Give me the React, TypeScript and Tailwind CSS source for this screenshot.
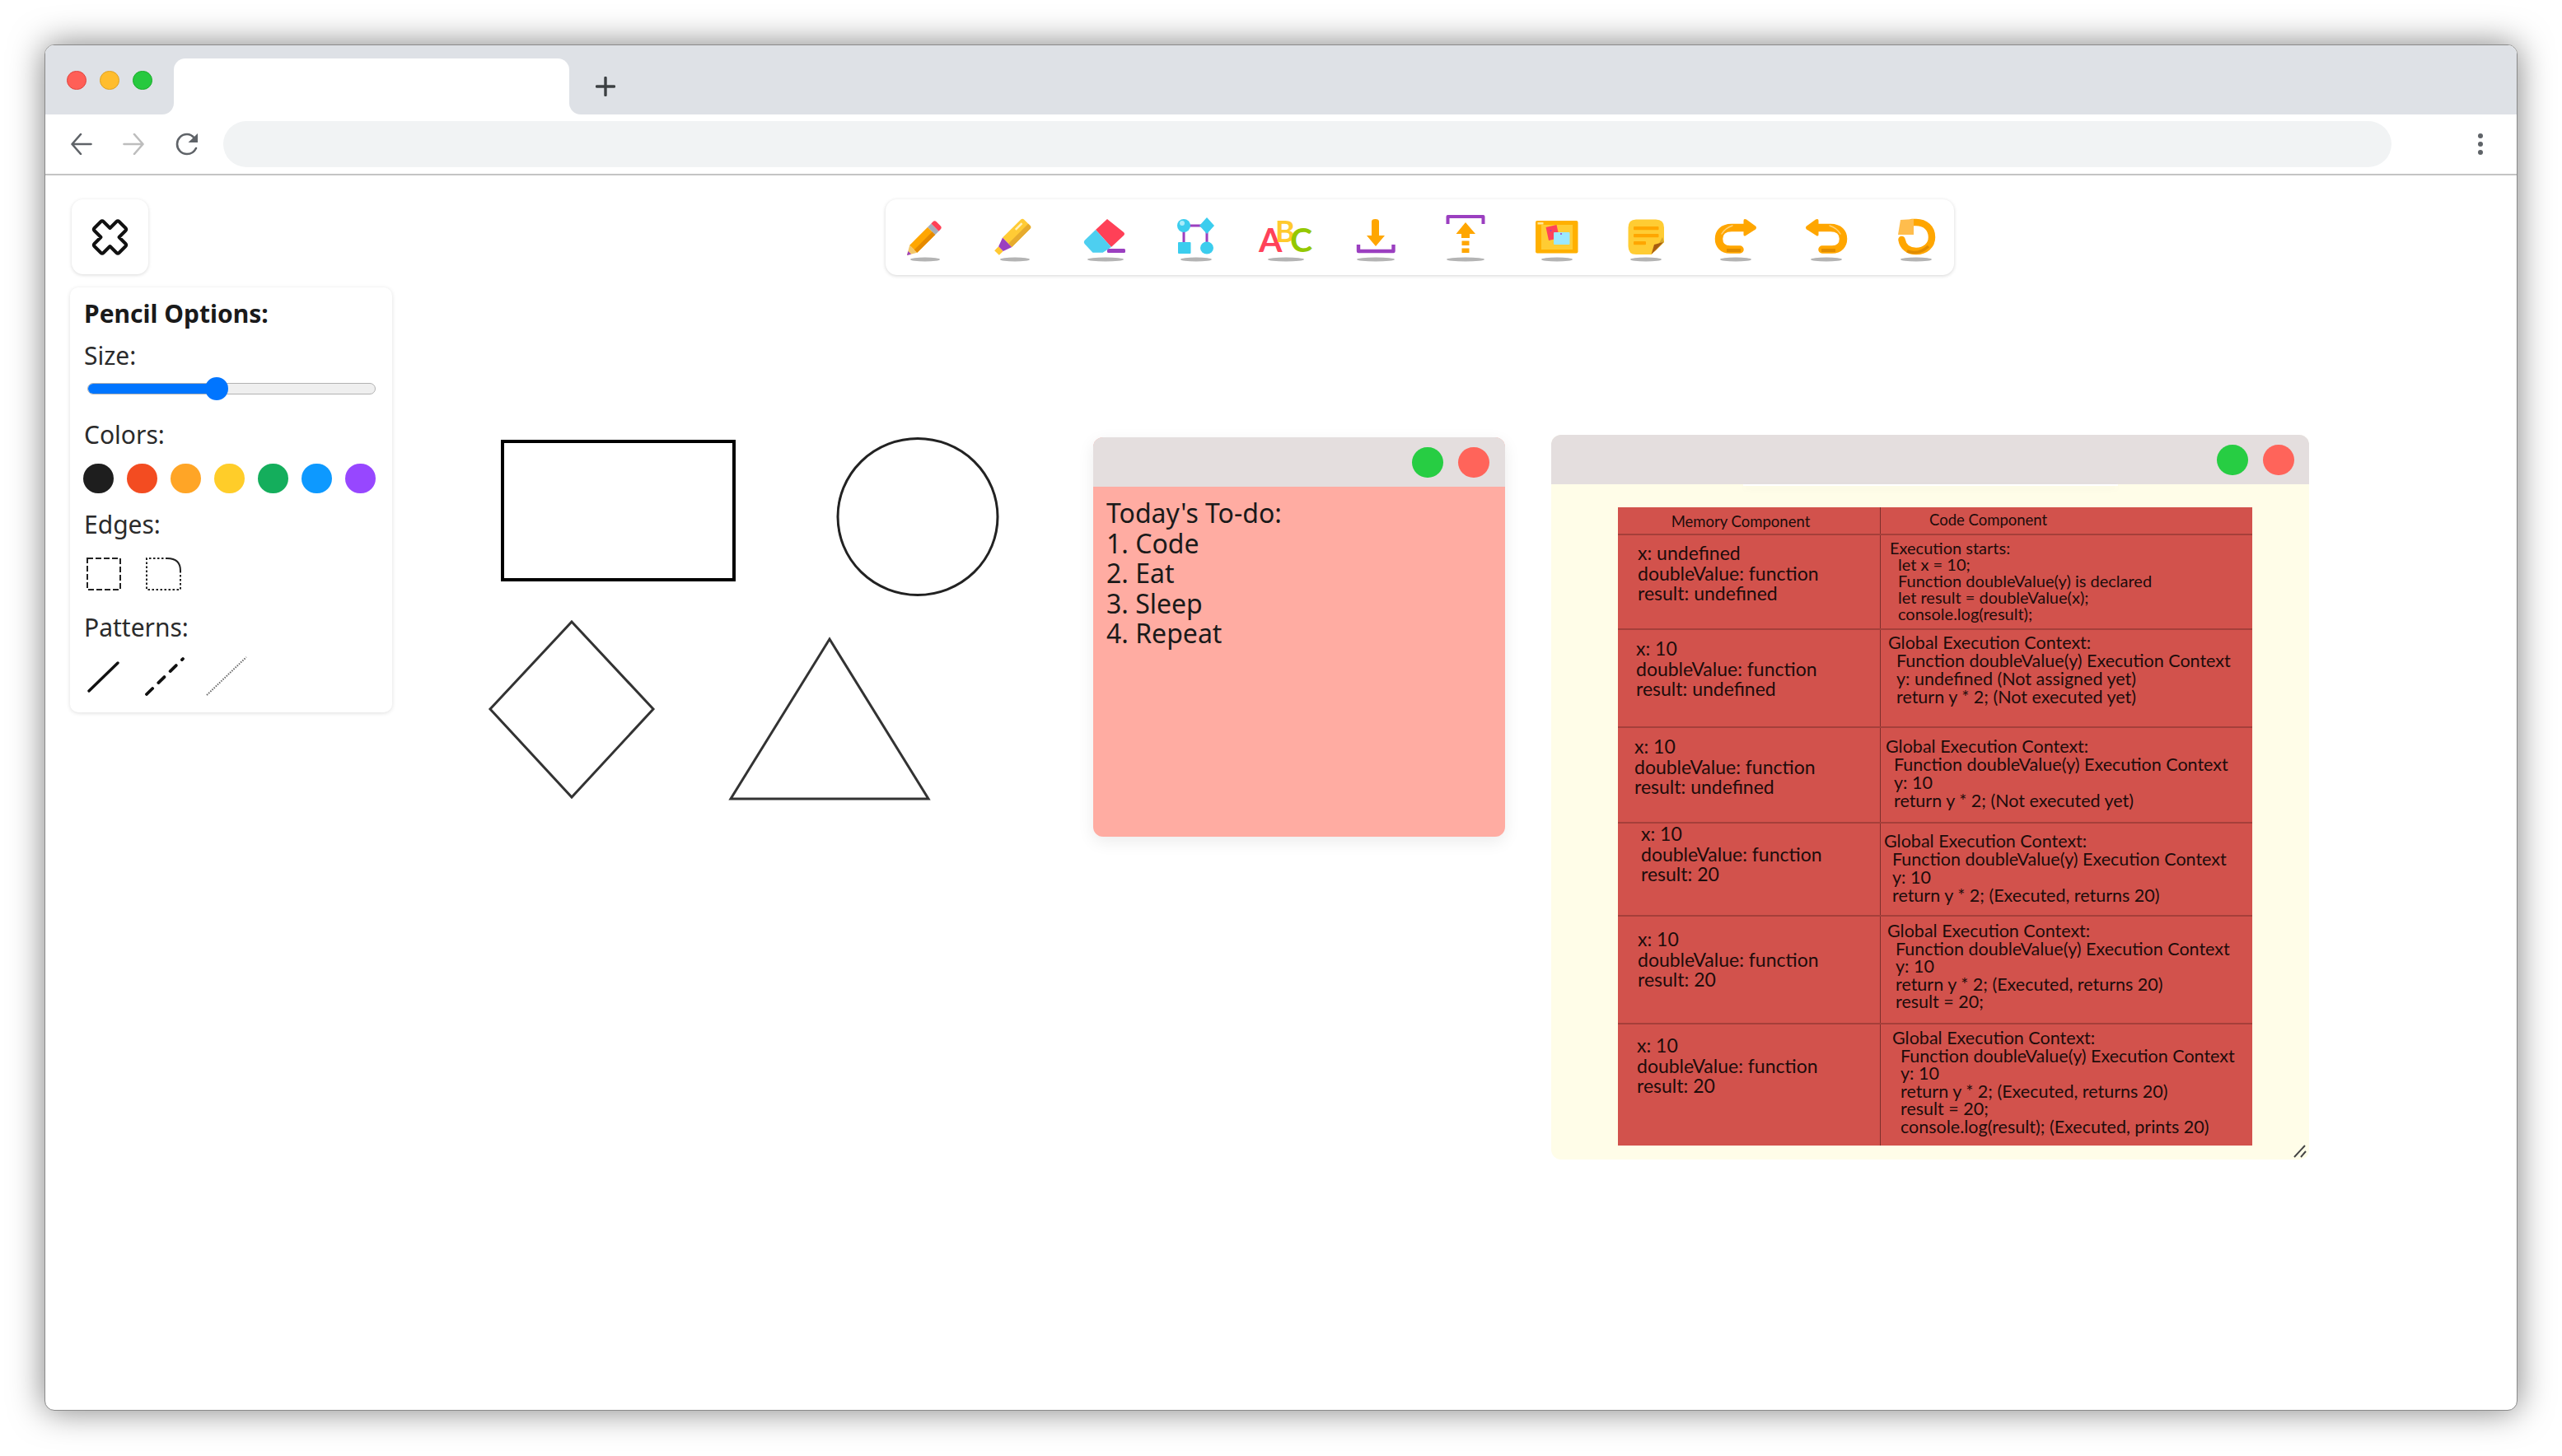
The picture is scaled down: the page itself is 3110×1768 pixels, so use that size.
import type { ReactNode } from "react";

const uiFont = "font-['Noto_Sans',sans-serif]";

function ToolIcon({ cx = 31, rx, children }: { cx?: number; rx: number; children: ReactNode }) {
  return (
    <svg viewBox="0 0 60 70" className="h-[70px] w-[60px] overflow-visible" aria-hidden>
      {children}
      <ellipse cx={cx} cy="62" rx={rx} ry="2.6" fill="#b4b4b4" />
    </svg>
  );
}

function PencilIcon() {
  return (
    <ToolIcon rx={18}>
      <g transform="translate(9 57) rotate(-45)">
        <path d="M0 0 11 -6.5V6.5Z" fill="#f2c76b" />
        <path d="M0 0 4.5 -2.6V2.6Z" fill="#9b3fc0" />
        <rect x="11" y="-6.5" width="31" height="13" fill="#ffa600" />
        <rect x="11" y="1.5" width="31" height="5" fill="#e58a00" />
        <rect x="42" y="-6.5" width="6" height="13" fill="#a6aebb" />
        <path d="M48 -6.5h3a3 3 0 0 1 3 3v7a3 3 0 0 1-3 3h-3Z" fill="#ff4057" />
      </g>
    </ToolIcon>
  );
}

function HighlighterIcon() {
  return (
    <ToolIcon rx={18}>
      <g transform="translate(9 54) rotate(-45)">
        <path d="M0 -4H7V4H0Z" fill="#ffc933" />
        <path d="M7 -4 18 -8V8L7 4Z" fill="#9b3fc0" />
        <path d="M18 -8H49a3 3 0 0 1 3 3V5a3 3 0 0 1-3 3H18Z" fill="#ffcb35" />
        <path d="M18 2H52V5a3 3 0 0 1-3 3H18Z" fill="#e6ab2e" />
        <rect x="36" y="-5" width="11" height="2.4" fill="#fff3c4" />
      </g>
    </ToolIcon>
  );
}

function EraserIcon() {
  return (
    <ToolIcon rx={22}>
      <rect x="33" y="49" width="22" height="5" rx="1.5" fill="#9b3fc0" />
      <path d="M33 13 53 29q2 2 0 4L38 47 19 26Z" fill="#ff4057" />
      <path d="M19 26 38 47 27.7 53.7H15.5L5.5 43q-1.5-2 0-4Z" fill="#4dcff0" />
    </ToolIcon>
  );
}

function NodesIcon() {
  return (
    <ToolIcon rx={19} cx={32}>
      <path d="M17 21H45V48M17 21V45" fill="none" stroke="#9b3fc0" strokeWidth="3" />
      <circle cx="17" cy="21" r="8" fill="#3bcdee" />
      <circle cx="15" cy="18" r="3" fill="#a9ecfa" />
      <path d="M45 11 54 21 45 31 36 21Z" fill="#3bcdee" />
      <rect x="10" y="41" width="15.5" height="14" rx="1" fill="#3bcdee" />
      <ellipse cx="45" cy="48" rx="8" ry="7.5" fill="#3bcdee" />
    </ToolIcon>
  );
}

function AbcIcon() {
  return (
    <ToolIcon rx={22} cx={32}>
      <g className="font-['Lato',sans-serif]" fontSize="41" fontWeight="700">
        <text x="-1" y="53" fill="#ff4259">A</text>
        <text x="19" y="41" fontSize="36" fill="#ffca2e">B</text>
        <text x="37" y="53" fill="#94c800">C</text>
      </g>
    </ToolIcon>
  );
}

function DownloadIcon() {
  return (
    <ToolIcon rx={23}>
      <path d="M10 44V52H52.5V44" fill="none" stroke="#9b3fc0" strokeWidth="4.4" strokeLinejoin="round" />
      <path d="M26 16q0-3 4.500-3t4.500 3V33H42L31 46 20 33H26Z" fill="#ffa600" />
    </ToolIcon>
  );
}

function UploadIcon() {
  return (
    <ToolIcon rx={23}>
      <path d="M9.500 19V10H52.500V19" fill="none" stroke="#9b3fc0" strokeWidth="4" strokeLinejoin="round" />
      <path d="M31 17 43 31H36V36H26V31H19.500Z" fill="#ffa600" />
      <rect x="26.500" y="39.500" width="9" height="5.500" fill="#ffa600" />
      <rect x="26.500" y="48.500" width="9" height="5.500" fill="#ffa600" />
    </ToolIcon>
  );
}

function BoardIcon() {
  return (
    <ToolIcon rx={19} cx={32}>
      <rect x="6" y="15" width="51.500" height="39.500" rx="2" fill="#ffb000" />
      <rect x="13" y="20" width="38" height="30" fill="#ffcc33" />
      <rect x="8.500" y="17" width="7" height="2.500" fill="#ffe89a" />
      <path d="M18.500 23 31.500 20 35 36 22 39Z" fill="#ff4259" />
      <rect x="28" y="29" width="19.500" height="15" rx="1" fill="#9be8ff" />
      <circle cx="37" cy="31" r="1" fill="#9b3fc0" />
      <circle cx="24.500" cy="27" r="1" fill="#9b3fc0" />
    </ToolIcon>
  );
}

function NoteIcon() {
  return (
    <ToolIcon rx={19} cx={31}>
      <path d="M19 13.500H43q10 0 10 10V41L37.500 56H19q-9.500 0-9.500-10V23.500q0-10 9.500-10Z" fill="#ffcc33" />
      <path d="M51 35 53 41 41 53Z" fill="#d9a92b" />
      <path d="M37.500 56 41 44 52 41Z" fill="#a85d10" />
      <rect x="16" y="22" width="30.500" height="4.200" rx="1" fill="#ffa600" />
      <rect x="16" y="31" width="30.500" height="4.200" rx="1" fill="#ffa600" />
      <rect x="16" y="40" width="15" height="4.200" rx="1" fill="#ffa600" />
    </ToolIcon>
  );
}

function RedoArrow() {
  return (
    <>
      <path d="M41 23.500H26C15 23.500 10.500 30 10.500 37S15 50 24 50H36" fill="none" stroke="#ffa600" strokeWidth="9.500" strokeLinecap="round" />
      <path d="M42 13q-1.500 0-1.500 2V32q0 2 2 1.500L55 25.500q2-2 0-4L44 13.500Z" fill="#ffa600" />
      <path d="M14 31Q18 24 27 21" fill="none" stroke="#ffd27a" strokeWidth="1.500" strokeLinecap="round" />
      <path d="M20 51H37" fill="none" stroke="#e08c00" strokeWidth="4" />
    </>
  );
}

function RedoIcon() {
  return (
    <ToolIcon rx={19} cx={31}>
      <RedoArrow />
    </ToolIcon>
  );
}

function UndoIcon() {
  return (
    <ToolIcon rx={19} cx={31}>
      <g transform="translate(62 0) scale(-1 1)">
        <RedoArrow />
      </g>
    </ToolIcon>
  );
}

function ResetIcon() {
  return (
    <ToolIcon rx={19} cx={31}>
      <path d="M13.500 38C15 47 22 52 31 52 42 52 50 45 50 35 50 24 42 17 31 17H26" fill="none" stroke="#ffa600" strokeWidth="8.500" strokeLinecap="round" />
      <path d="M12 14 28 13V32H9Z" fill="#ffbd4d" strokeLinejoin="round" />
      <path d="M20 52Q34 57 46 46" fill="none" stroke="#e08c00" strokeWidth="3.500" />
    </ToolIcon>
  );
}

function LogoMark() {
  return (
    <svg viewBox="0 0 44 44" className="h-[44px] w-[45px]" fill="none" stroke="#111" strokeWidth="4" strokeLinejoin="round" aria-hidden>
      <path d="M22 11 30 3Q31.500 1.500 33 3L41 11Q42.500 12.500 41 14L33 22 41 30Q42.500 31.500 41 33L33 41Q31.500 42.500 30 41L22 33 14 41Q12.500 42.500 11 41L3 33Q1.500 31.500 3 30L11 22 3 14Q1.500 12.500 3 11L11 3Q12.500 1.500 14 3Z" />
    </svg>
  );
}

function BrowserBar() {
  return (
    <>
      <div className="flex h-[84px] bg-white">
        <div className="flex w-[156px] items-start gap-[16.500px] rounded-br-[14px] bg-[#dee1e6] pl-[26px] pt-[31px]">
          <span className="h-[23px] w-[23.500px] rounded-full border border-[#e0443e] bg-[#ff5f57]" />
          <span className="h-[23px] w-[23.500px] rounded-full border border-[#dea123] bg-[#ffbd2e]" />
          <span className="h-[23px] w-[23.500px] rounded-full border border-[#1aab29] bg-[#27c93f]" />
        </div>
        <div className="w-[480px] bg-[#dee1e6] pt-[16px]">
          <div className="h-[68px] rounded-t-[14px] bg-white" />
        </div>
        <div className="flex-1 rounded-bl-[14px] bg-[#dee1e6] pl-[32px] pt-[38px]">
          <svg viewBox="0 0 24 24" className="h-[24px] w-[24px]" stroke="#3c4043" strokeWidth="3.400" strokeLinecap="round" aria-hidden>
            <path d="M12 1.500V22.500M1.500 12H22.500" />
          </svg>
        </div>
      </div>
      <div className="flex h-[74px] items-center border-b-2 border-[#c4c4c4] bg-white">
        <svg viewBox="0 0 26 26" className="ml-[31px] h-[26px] w-[26px]" fill="none" stroke="#5f6368" strokeWidth="2.600" strokeLinecap="round" strokeLinejoin="round" aria-hidden>
          <path d="M24.500 13H2M12 1 1.500 13 12 25" />
        </svg>
        <svg viewBox="0 0 26 26" className="ml-[37px] h-[26px] w-[26px]" fill="none" stroke="#bdbdbd" strokeWidth="2.600" strokeLinecap="round" strokeLinejoin="round" aria-hidden>
          <path d="M1.500 13H24M14 1 24.500 13 14 25" />
        </svg>
        <svg viewBox="0 0 28 28" className="ml-[38px] h-[28px] w-[28px]" fill="none" stroke="#5f6368" strokeWidth="2.600" strokeLinecap="round" aria-hidden>
          <path d="M23 7C20.500 3.500 17.500 2 14 2 7 2 2 7.500 2 14S7 26 14 26C19 26 23 23 25 19" />
          <path d="M27 1V12H15.500Z" fill="#5f6368" stroke="none" />
        </svg>
        <div className="ml-[30px] h-[56px] w-[2632px] rounded-full bg-[#f1f3f4]" />
        <div className="ml-[105px] flex flex-col gap-[4px]">
          <span className="h-[6px] w-[6px] rounded-full bg-[#5f6368]" />
          <span className="h-[6px] w-[6px] rounded-full bg-[#5f6368]" />
          <span className="h-[6px] w-[6px] rounded-full bg-[#5f6368]" />
        </div>
      </div>
    </>
  );
}

const swatches = ["bg-[#1e1e1e]", "bg-[#f34c21]", "bg-[#ffa526]", "bg-[#ffcd29]", "bg-[#14ae5c]", "bg-[#0d99ff]", "bg-[#9747ff]"];

function OptionsPanel() {
  const label = "h-[40px] pl-[17px] text-[30px] leading-[40px] text-[#2b2b2b]";
  return (
    <div className={`${uiFont} h-[516px] w-[391px] rounded-[10px] bg-white pt-[12px] shadow-[0_1px_5px_rgba(0,0,0,0.13)]`}>
      <div className="h-[40px] pl-[17px] text-[30px] font-bold leading-[40px] text-[#1a1a1a]">Pencil Options:</div>
      <div className={`${label} mt-[11px]`}>Size:</div>
      <div className="relative ml-[21px] mt-[13px] h-[14px] w-[350px] rounded-full border border-[#b2b2b2] bg-[#efefef]">
        <div className="h-full w-[156px] rounded-full bg-[#0075ff]" />
        <div className="absolute left-[142px] top-[-8px] h-[28px] w-[28px] rounded-full bg-[#0075ff]" />
      </div>
      <div className={`${label} mt-[29px]`}>Colors:</div>
      <div className="ml-[15.500px] mt-[15px] flex gap-[16.100px]">
        {swatches.map((c) => (
          <span key={c} className={`h-[36px] w-[37px] rounded-full ${c}`} />
        ))}
      </div>
      <div className={`${label} mt-[18px]`}>Edges:</div>
      <div className="ml-[20px] mt-[20px] flex gap-[30px]">
        <svg viewBox="0 0 42 40" className="h-[40px] w-[42px]" fill="none" stroke="#222" strokeWidth="2" strokeDasharray="7 3" aria-hidden>
          <rect x="1" y="1" width="40" height="38" />
        </svg>
        <svg viewBox="0 0 43 40" className="h-[40px] w-[43px]" fill="none" stroke="#222" strokeWidth="2" aria-hidden>
          <path d="M42 16V39H1V1H26" strokeDasharray="2.500 2.500" />
          <path d="M26 1Q42 1 42 16" />
        </svg>
      </div>
      <div className={`${label} mt-[25px]`}>Patterns:</div>
      <div className="ml-[20px] mt-[15px] flex items-center gap-[31px]">
        <svg viewBox="0 0 40 40" className="h-[40px] w-[40px]" fill="none" stroke="#111" strokeWidth="3.400" strokeLinecap="round" aria-hidden>
          <path d="M3 38 38 4" />
        </svg>
        <svg viewBox="0 0 48 48" className="h-[48px] w-[48px]" fill="none" stroke="#111" strokeWidth="3.800" strokeLinecap="round" strokeDasharray="10 10" aria-hidden>
          <path d="M2 46 46 3" />
        </svg>
        <svg viewBox="0 0 50 48" className="ml-[-5px] h-[48px] w-[50px]" fill="none" stroke="#666" strokeWidth="2" strokeDasharray="1.500 1.500" aria-hidden>
          <path d="M1 47 49 1" />
        </svg>
      </div>
    </div>
  );
}

function WindowHeader({ className }: { className: string }) {
  return (
    <div className={`flex items-center justify-end gap-[18px] rounded-t-[12px] bg-[#e4dede] ${className}`}>
      <span className="h-[37px] w-[38px] rounded-full bg-[#27cd43]" />
      <span className="h-[37px] w-[38px] rounded-full bg-[#ff645a]" />
    </div>
  );
}

const memUndefined = ["x: 10", "doubleValue: function", "result: undefined"];
const memDone = ["x: 10", "doubleValue: function", "result: 20"];
const fnHead = ["Global Execution Context:", "Function doubleValue(y) Execution Context"];

const rows = [
  {
    h: "h-[115px]",
    memBox: "pl-[24px] pt-[9px]",
    mem: ["x: undefined", "doubleValue: function", "result: undefined"],
    codeBox: "pl-[11px] pt-[5px] text-[20px] leading-[20px]",
    head: "Execution starts:",
    code: ["let x = 10;", "Function doubleValue(y) is declared", "let result = doubleValue(x);", "console.log(result);"],
  },
  {
    h: "h-[119px]",
    memBox: "pl-[22px] pt-[10px]",
    mem: memUndefined,
    codeBox: "pl-[9px] pt-[4px] text-[21.500px] leading-[22px]",
    head: fnHead[0],
    code: [fnHead[1], "y: undefined (Not assigned yet)", "return y * 2; (Not executed yet)"],
  },
  {
    h: "h-[116px]",
    memBox: "pl-[20px] pt-[10px]",
    mem: memUndefined,
    codeBox: "pl-[6px] pt-[11px] text-[21.500px] leading-[22px]",
    head: fnHead[0],
    code: [fnHead[1], "y: 10", "return y * 2; (Not executed yet)"],
  },
  {
    h: "h-[113px]",
    memBox: "pl-[28px] pt-0",
    mem: memDone,
    codeBox: "pl-[4px] pt-[10px] text-[21.500px] leading-[22px]",
    head: fnHead[0],
    code: [fnHead[1], "y: 10", "return y * 2; (Executed, returns 20)"],
  },
  {
    h: "h-[131px]",
    memBox: "pl-[24px] pt-[15px]",
    mem: memDone,
    codeBox: "pl-[8px] pt-[7px] text-[21.500px] leading-[21.500px]",
    head: fnHead[0],
    code: [fnHead[1], "y: 10", "return y * 2; (Executed, returns 20)", "result = 20;"],
  },
  {
    h: "h-[147px]",
    memBox: "pl-[23px] pt-[13px]",
    mem: memDone,
    codeBox: "pl-[14px] pt-[6px] text-[21.500px] leading-[21.500px]",
    head: fnHead[0],
    code: [fnHead[1], "y: 10", "return y * 2; (Executed, returns 20)", "result = 20;", "console.log(result); (Executed, prints 20)"],
  },
];

function MemoryTable() {
  return (
    <div className="w-[770px] bg-[#d2524c] font-['Lato',sans-serif] text-[#1d0c0b]">
      <div className="flex h-[34px] border-b-2 border-[#a53f3a] text-[18.500px] leading-[34px]">
        <div className="w-[319px] border-r border-[#7c2f2b] pr-[20px] text-center">Memory Component</div>
        <div className="pl-[59px] leading-[30px]">Code Component</div>
      </div>
      {rows.map((r, i) => (
        <div key={i} className={`flex border-b-2 border-[#a53f3a] last:border-b-0 ${r.h}`}>
          <div className={`w-[319px] border-r border-[#7c2f2b] text-[23px] leading-[24.500px] ${r.memBox}`}>
            {r.mem.map((line) => (
              <div key={line}>{line}</div>
            ))}
          </div>
          <div className={r.codeBox}>
            <div>{r.head}</div>
            <div className="pl-[10px]">
              {r.code.map((line) => (
                <div key={line}>{line}</div>
              ))}
            </div>
          </div>
        </div>
      ))}
    </div>
  );
}

function Shapes() {
  return (
    <svg viewBox="580 520 650 465" className="absolute left-[525px] top-[306px] h-[465px] w-[650px]" fill="none" stroke="#333" strokeWidth="3" aria-hidden>
      <rect x="610" y="537" width="281" height="168" stroke="#000" strokeWidth="4" />
      <ellipse cx="1114" cy="628.500" rx="97" ry="95" stroke="#222" />
      <path d="M694 756 793 862 694 969 595 862Z" />
      <path d="M1007 777 1127 971H887Z" />
    </svg>
  );
}

export default function App() {
  return (
    <div className="h-[1768px] w-[3110px] overflow-hidden bg-white pl-[54px] pt-[54px]">
      <div className="flex h-[1659px] w-[3002px] flex-col overflow-hidden rounded-[12px] border border-[#8a8a8a] bg-white shadow-[0_0_40px_rgba(0,0,0,0.5)]">
        <BrowserBar />
        <main className={`relative flex flex-1 items-start pl-[30px] pt-[29px] ${uiFont}`}>
          <div className="flex w-[393px] flex-col gap-[16px]">
            <div className="ml-[2px] flex h-[91px] w-[93px] items-center justify-center rounded-[14px] bg-white shadow-[0_1px_4px_rgba(0,0,0,0.15)]">
              <LogoMark />
            </div>
            <OptionsPanel />
          </div>
          <div className="ml-[597px] flex h-[92px] w-[1297px] items-center justify-between rounded-[14px] bg-white px-[17px] shadow-[0_1px_4px_rgba(0,0,0,0.17)]">
            <PencilIcon />
            <HighlighterIcon />
            <EraserIcon />
            <NodesIcon />
            <AbcIcon />
            <DownloadIcon />
            <UploadIcon />
            <BoardIcon />
            <NoteIcon />
            <RedoIcon />
            <UndoIcon />
            <ResetIcon />
          </div>

          <Shapes />

          <div className="absolute left-[1272px] top-[318px] h-[485px] w-[500px] rounded-[12px] bg-[#ffaca2] shadow-[0_6px_20px_rgba(0,0,0,0.08)]">
            <WindowHeader className="h-[60px] pr-[19px]" />
            <div className="pl-[16px] pt-[14px] text-[32px] leading-[36.600px] text-[#1a1a1a]">
              <div>Today's To-do:</div>
              <div>1. Code</div>
              <div>2. Eat</div>
              <div>3. Sleep</div>
              <div>4. Repeat</div>
            </div>
          </div>

          <div className="absolute left-[1828px] top-[315px] h-[880px] w-[920px] rounded-[12px] bg-[#fffde8]">
            <WindowHeader className="h-[60px] pr-[18px]" />
            <div className="mx-auto h-[2px] w-[455px] bg-white shadow-[0_3px_10px_rgba(0,0,0,0.06)]" />
            <div className="ml-[81px] mt-[26px]">
              <MemoryTable />
            </div>
            <svg viewBox="0 0 16 16" className="absolute bottom-[2px] right-[3px] h-[16px] w-[16px]" stroke="#444" strokeWidth="2" aria-hidden>
              <path d="M1 15 14 1M9 15 15 8" />
            </svg>
          </div>
        </main>
      </div>
    </div>
  );
}
